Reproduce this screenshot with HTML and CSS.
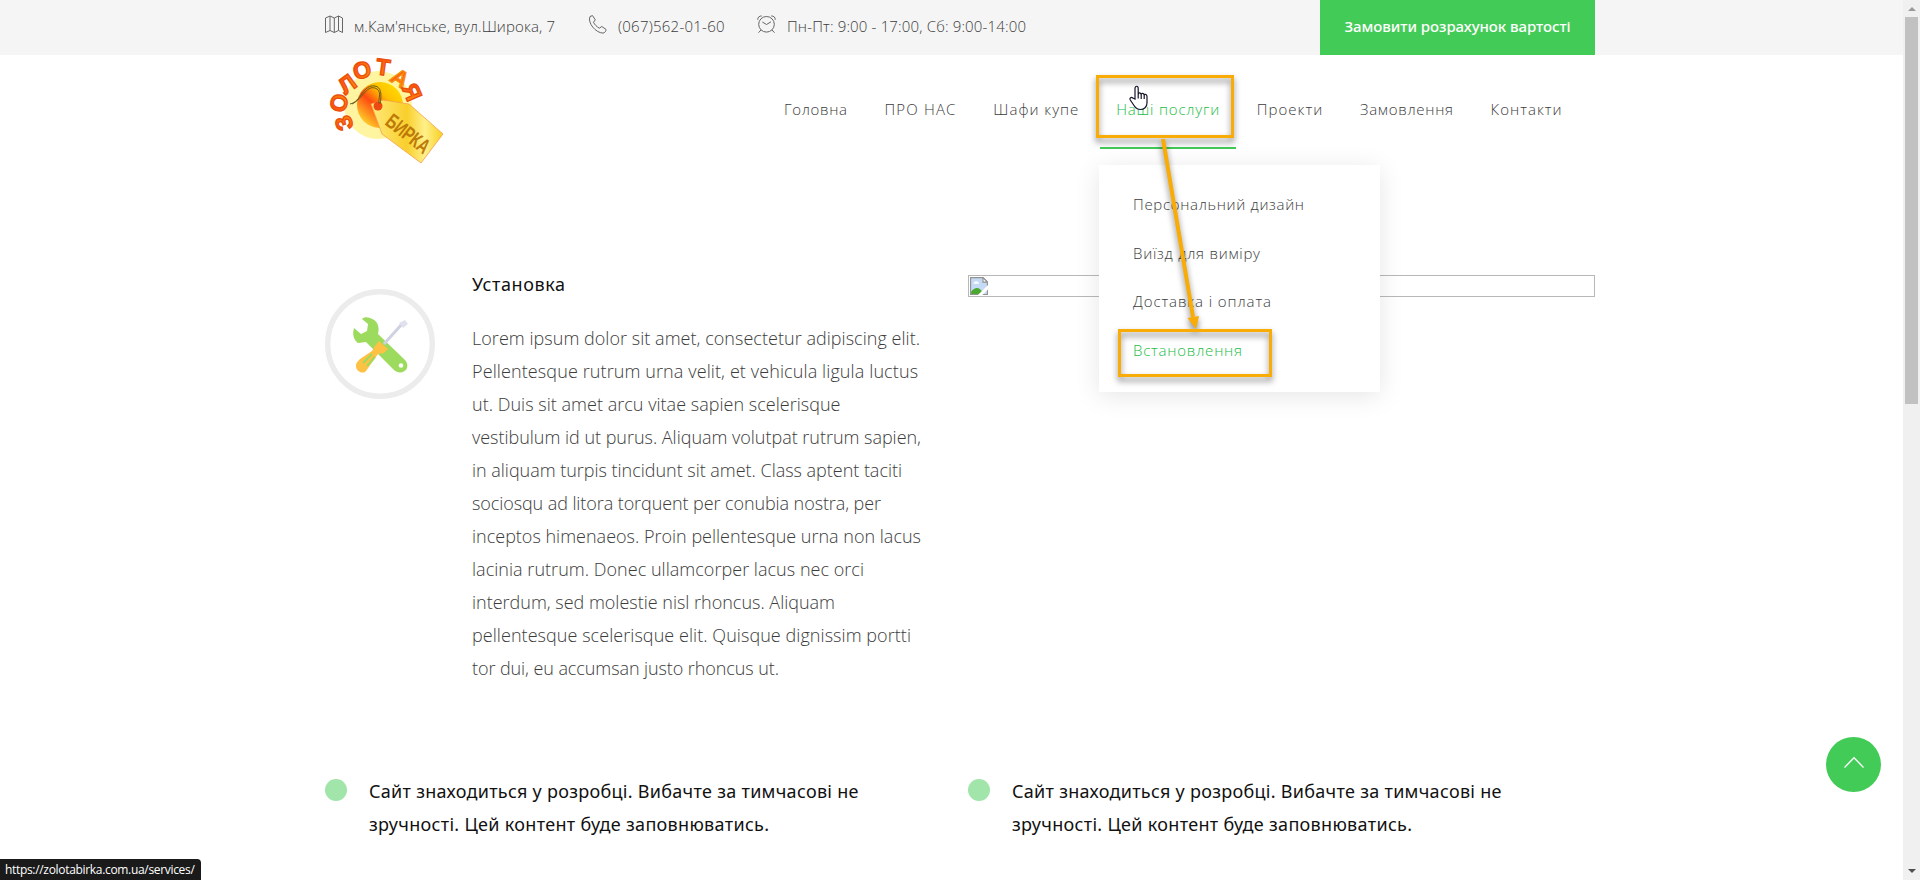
FILE: index.html
```html
<!DOCTYPE html>
<html lang="uk">
<head>
<meta charset="utf-8">
<title>Золотая бирка</title>
<link rel="stylesheet" href="styles.css">
</head>
<body>
<div class="page">
  <div class="topbar">
    <div class="container topbar-inner">
      <div class="contact contact-address">
        <svg class="icon" width="18" height="19" viewBox="0 0 18 19"><path d="M.5 3 5 1l4.300 2L13.500 1l4 2v14.500l-4-2-4.200 2-4.300-2-4.500 2zM5 1v14.500M9.300 3v14.500M13.500 1v14.500"/></svg>
        <span>м.Кам'янське, вул.Широка, 7</span>
      </div>
      <div class="contact contact-phone">
        <svg class="icon" width="19" height="19" viewBox="0 0 19 19"><path d="M2 1.500 4.500.6 7.300 4.800 5.500 7.200c1 2.300 3.200 4.500 5.800 6l2.500-1.700 4.200 2.900c.2 1.700-1 3.300-3 3.700C8 18-.8 8 2 1.500z"/></svg>
        <span>(067)562-01-60</span>
      </div>
      <div class="contact contact-hours">
        <svg class="icon" width="19" height="19" viewBox="0 0 19 19"><circle cx="9.500" cy="9.300" r="7.800"/><path d="m5.300 7 4.200 2.500 4.500-2.700M.8 4.800C.4 2.500 2.500.6 4.800 1M14.200 1c2.300-.4 4.400 1.500 4 3.800M4 15l-2.500 2.700M15 15l2.500 2.700"/></svg>
        <span>Пн-Пт: 9:00 - 17:00, Сб: 9:00-14:00</span>
      </div>
      <a class="quote-btn">Замовити розрахунок вартості</a>
    </div>
  </div>

  <header class="container header">
    <svg class="logo" width="125" height="112" viewBox="0 0 125 112">
      <defs>
        <linearGradient id="sun" x1="1" y1="0" x2="0.200" y2="0.900"><stop offset="0" stop-color="#ffe800"/><stop offset=".4" stop-color="#ffc000"/><stop offset=".65" stop-color="#ff4a10"/><stop offset="1" stop-color="#ffc928"/></linearGradient>
        <linearGradient id="tag"><stop offset="0" stop-color="#ffe97a"/><stop offset=".5" stop-color="#f9cf2c"/><stop offset=".75" stop-color="#fff08a"/><stop offset="1" stop-color="#f8cf20"/></linearGradient>
        <linearGradient id="letter" x1="0" y1="0" x2="1" y2="1"><stop offset="0" stop-color="#ff3b12"/><stop offset="1" stop-color="#ff9a08"/></linearGradient>
      </defs>
      <circle cx="53" cy="50" r="34" fill="#fff5a0"/>
      <circle cx="55" cy="50" r="23" fill="url(#sun)"/>
      <path d="M46 49 58 45 84 49l34 30-22 29-39-29z" fill="url(#tag)" stroke="#f5a04a" stroke-width=".8"/>
      <circle cx="53" cy="51" r="4.500" fill="#ec4a12"/>
      <path d="M25 49c11-2 13-20 25-18 6 1 7 8 5 18M27 49c11-5 15-21 25-15 5 4 1 10 2 14" fill="none" stroke="#6b5a1a" stroke-width="1"/>
      <g class="logo-letters" fill="url(#letter)">
        <text transform="translate(19 68) rotate(-108)" y="8">З</text>
        <text transform="translate(14 48) rotate(-76)" y="8">О</text>
        <text transform="translate(22 29) rotate(-36)" y="8">Л</text>
        <text transform="translate(37 15) rotate(-14)" y="8">О</text>
        <text transform="translate(58 12) rotate(8)" y="8">Т</text>
        <text class="warm" transform="translate(75 23) rotate(33)" y="8">А</text>
        <text transform="translate(87 37) rotate(67)" y="8">Я</text>
      </g>
      <text class="logo-tag" transform="translate(59 69) rotate(38)" textLength="50" lengthAdjust="spacingAndGlyphs">БИРКА</text>
    </svg>
    <nav class="nav">
      <a>Головна</a>
      <a>ПРО НАС</a>
      <a>Шафи купе</a>
      <a class="active">Наші послуги</a>
      <a>Проекти</a>
      <a>Замовлення</a>
      <a>Контакти</a>
    </nav>
    <div class="dropdown">
      <a>Персональний дизайн</a>
      <a>Виїзд для виміру</a>
      <a>Доставка і оплата</a>
      <a class="current">Встановлення</a>
    </div>
  </header>

  <main class="container">
    <section class="service">
      <svg class="service-icon" width="110" height="110" viewBox="0 0 110 110">
        <circle cx="55" cy="55" r="52.300" fill="#fff" stroke="#ececec" stroke-width="5.400"/>
        <path d="m33 54 8-1 28 28c4 4 11 3 13-2 1-3 0-6-2-8L53 45c2-8-1-14-8-16-3-1-6-1-8 1l6 5-1 7-6 3-7-6c-2 7 0 12 4 15z" fill="#9ddb5f"/>
        <circle cx="76" cy="76.500" r="2.300" fill="#fff"/>
        <path d="m59 55 18-20" stroke="#cfd2e2" stroke-width="3"/>
        <path d="m74 34 6-3 3 4-5 4z" fill="#dfe1ee"/>
        <path d="m54 52 9 8-4 4-6 1-12 17c-3 4-11 0-10-6 0-2 2-4 4-6l12-8 3-5z" fill="#fdc244"/>
        <path d="m38 74 9-9M42 77l8-9" stroke="#9ddb5f" stroke-width="2"/>
      </svg>
      <div class="service-body">
        <h4>Установка</h4>
        <p class="lines">
          <span>Lorem ipsum dolor sit amet, consectetur adipiscing elit.</span>
          <span>Pellentesque rutrum urna velit, et vehicula ligula luctus</span>
          <span>ut. Duis sit amet arcu vitae sapien scelerisque</span>
          <span>vestibulum id ut purus. Aliquam volutpat rutrum sapien,</span>
          <span>in aliquam turpis tincidunt sit amet. Class aptent taciti</span>
          <span>sociosqu ad litora torquent per conubia nostra, per</span>
          <span>inceptos himenaeos. Proin pellentesque urna non lacus</span>
          <span>lacinia rutrum. Donec ullamcorper lacus nec orci</span>
          <span>interdum, sed molestie nisl rhoncus. Aliquam</span>
          <span>pellentesque scelerisque elit. Quisque dignissim portti</span>
          <span>tor dui, eu accumsan justo rhoncus ut.</span>
        </p>
      </div>
      <div class="missing-image">
        <svg width="18" height="18" viewBox="0 0 16 16"><path d="M.5.500h11l4 4v11H.5z" fill="#c4daf5" stroke="#929292"/><path d="M11.500.500v4h4z" fill="#fff" stroke="#929292"/><path d="M3 6c0-3 5-3 5 0z" fill="#fff"/><path d="M1 15v-2c4-5 8-4 11 2z" fill="#4aa82e"/><path d="M7 16 16 7v4l-5 5z" fill="#fff"/></svg>
      </div>
    </section>

    <section class="notes">
      <div class="note"><i class="dot"></i><p><span>Сайт знаходиться у розробці. Вибачте за тимчасові не</span><span>зручності. Цей контент буде заповнюватись.</span></p></div>
      <div class="note"><i class="dot"></i><p><span>Сайт знаходиться у розробці. Вибачте за тимчасові не</span><span>зручності. Цей контент буде заповнюватись.</span></p></div>
    </section>
  </main>
</div>

<div class="scrollbar"><i class="arrow-up"></i><div class="thumb"></div><i class="arrow-down"></i></div>

<a class="to-top"><svg width="22" height="14" viewBox="0 0 22 14"><path d="m1.500 11.500 9.500-9.700 9.500 9.700" fill="none" stroke="#fff" stroke-width="1.300"/></svg></a>
<div class="status">https://zolotabirka.com.ua/services/</div>

<svg class="callouts" width="200" height="330" viewBox="0 0 200 330">
  <rect x="17.500" y="16.500" width="135" height="60"/>
  <rect x="39.500" y="270.500" width="151" height="45"/>
  <path d="m83 79 30 178" stroke-width="4"/>
  <path d="m107.500 258 11.500-2-3 13z" class="head"/>
</svg>
<svg class="cursor" width="20" height="26" viewBox="0 0 20 26"><path d="M6 14V3.500C6 .5 9.200.5 9.200 3.500V10c0-3 3-2.500 3 0 0-2.500 3-2 3 .5 0-2 2.800-1.500 2.800 1V18c0 4-3 6.500-6.500 6.500-3 0-5-1.500-6.500-4L1.300 15c-1-2 1-3.500 2.500-2zM12.200 10v4M15.200 10.500V14M9.200 10v3.500" fill="#fff" stroke="#15152a" stroke-width="1.200"/></svg>
</body>
</html>
```
FILE: styles.css
```css
* { box-sizing: border-box; }
body { margin: 0; background: #fff; color: #3c3c3c; font-family: "Open Sans", sans-serif; font-weight: 300; overflow: hidden; }
.page { height: 880px; overflow: hidden; }
.container { width: 1270px; margin: 0 auto; }

.topbar { background: #f5f5f5; height: 55px; }
.topbar-inner { display: flex; height: 55px; }
.contact { display: flex; align-items: flex-start; font-size: 15px; line-height: 20px; white-space: nowrap; }
.contact span { margin-top: 16px; }
.icon { margin-top: 15px; fill: none; stroke: #666; stroke-width: 1; }
.contact-address { width: 263px; gap: 11px; letter-spacing: .127px; }
.contact-phone { width: 169px; gap: 11px; letter-spacing: .236px; }
.contact-hours { gap: 11px; letter-spacing: .155px; }
.quote-btn { width: 275px; height: 55px; margin-left: auto; background: #43cb57; color: #fff; font: 500 15px/53px "Noto Sans", sans-serif; letter-spacing: -.05px; text-align: center; white-space: nowrap; }

.header { position: relative; display: flex; height: 220px; }
.logo { overflow: visible; }
.logo-letters text { font: bold 23px "Liberation Sans", sans-serif; text-anchor: middle; stroke: #ea4f0c; stroke-width: 1.3; }
.logo-letters .warm { stroke: #f59010; }
.logo-tag { font: bold 21px "Liberation Sans", sans-serif; fill: #bd7a08; }
.nav { display: flex; margin-left: auto; margin-right: 14px; height: 94px; }
.nav a { height: 94px; margin: 0 2px; padding: 0 16.400px; font-size: 15px; line-height: 109px; white-space: nowrap; }
.nav a:nth-child(1) { letter-spacing: .682px; }
.nav a:nth-child(2) { letter-spacing: 1.172px; }
.nav a:nth-child(3) { letter-spacing: .998px; }
.nav a:nth-child(4) { letter-spacing: .807px; }
.nav a:nth-child(5) { letter-spacing: 1.039px; }
.nav a:nth-child(6) { letter-spacing: .731px; }
.nav a:nth-child(7) { letter-spacing: 1.033px; }
.nav .active { color: #22bd46; border-bottom: 2px solid #43cb57; }
.dropdown { position: absolute; left: 774px; top: 110px; z-index: 2; width: 281px; height: 227px; padding: 15px 34px; background: #fff; box-shadow: 0 4px 24px rgba(0,0,0,.1); }
.dropdown a { display: block; height: 48.500px; font-size: 15px; line-height: 48px; white-space: nowrap; }
.dropdown a:nth-child(1) { letter-spacing: .679px; }
.dropdown a:nth-child(2) { letter-spacing: .754px; }
.dropdown a:nth-child(3) { letter-spacing: .910px; }
.dropdown a:nth-child(4) { letter-spacing: .790px; }
.dropdown .current { color: #22bd46; }

.service { display: flex; height: 500px; }
.service-icon { margin-top: 14px; }
.service-body { width: 496px; margin-left: 37px; font-size: 18px; line-height: 33px; white-space: nowrap; }
h4 { margin: -7px 0 21px; color: #111; font: 400 18px/33px "Noto Sans", sans-serif; letter-spacing: .578px; }
.lines { margin: 0; }
.lines span { display: block; }
.lines span:nth-child(1) { letter-spacing: .034px; }
.lines span:nth-child(2) { letter-spacing: .107px; }
.lines span:nth-child(3) { letter-spacing: .022px; }
.lines span:nth-child(4) { letter-spacing: -.022px; }
.lines span:nth-child(5) { letter-spacing: -.025px; }
.lines span:nth-child(6) { letter-spacing: -.088px; }
.lines span:nth-child(8) { letter-spacing: .029px; }
.lines span:nth-child(9) { letter-spacing: -.009px; }
.lines span:nth-child(10) { letter-spacing: .056px; }
.lines span:nth-child(11) { letter-spacing: -.084px; }
.missing-image { width: 627px; height: 22px; padding: 1px; border: 1px solid #b8b8b8; }
.missing-image svg { display: block; }

.notes { display: flex; }
.note { display: flex; width: 643px; flex: none; color: #111; font: 400 18px/33px "Noto Sans", sans-serif; white-space: nowrap; }
.note p { margin: 0 0 0 22px; }
.note span { display: block; letter-spacing: .289px; }
.note span + span { letter-spacing: .309px; }
.dot { width: 22px; height: 22px; margin-top: 4px; border-radius: 50%; background: #a1e5ab; }

.scrollbar { position: fixed; top: 0; right: 0; display: flex; flex-direction: column; align-items: center; width: 17px; height: 880px; background: #f0f0f0; }
.thumb { width: 13px; height: 387px; margin-top: 6px; background: #c1c1c1; }
.arrow-up { margin-top: 7px; border: 4px solid transparent; border-top: 0; border-bottom-color: #999; }
.arrow-down { margin: auto 0 7px; border: 4px solid transparent; border-bottom: 0; border-top-color: #505050; }
.to-top { position: fixed; left: 1826px; top: 737px; display: flex; justify-content: center; width: 55px; height: 55px; padding-top: 19px; border-radius: 50%; background: #43cb57; }
.status { position: fixed; left: 0; bottom: 0; width: 201px; height: 21px; padding-left: 5px; border-radius: 0 4px 0 0; background: #1a1a1a; color: #fff; font: 400 12px/21px "Open Sans", sans-serif; letter-spacing: -.32px; white-space: nowrap; }
.callouts { position: absolute; left: 1080px; top: 60px; z-index: 3; fill: none; stroke: #f9ab06; stroke-width: 3; filter: drop-shadow(0 4px 3px rgba(0,0,0,.5)); }
.callouts .head { fill: #f9ab06; stroke: none; }
.cursor { position: absolute; left: 1129px; top: 85px; z-index: 4; }
```
